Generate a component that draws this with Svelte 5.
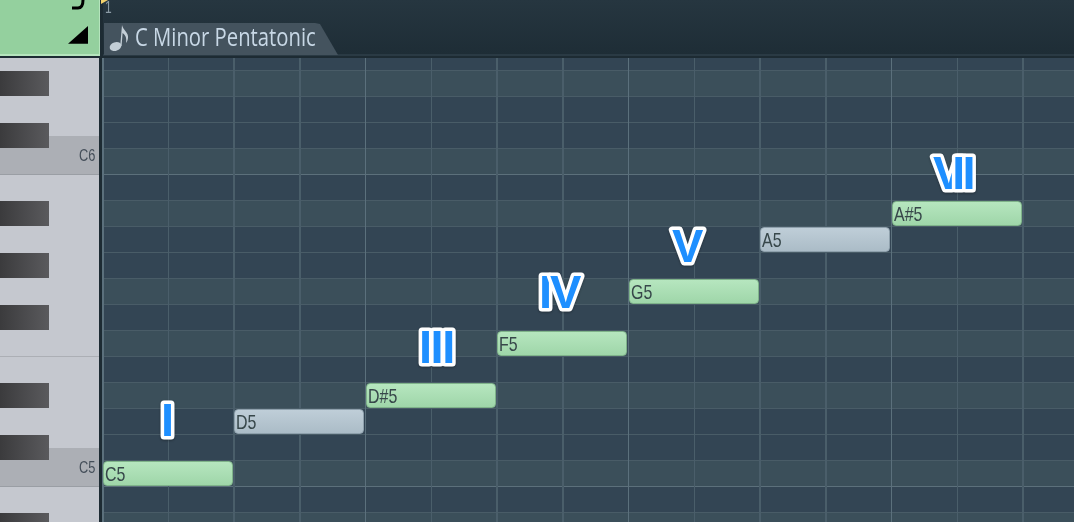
<script>
    const rowHeight = 26;
    const beatWidth = 65.75;
    const rowCount = 20;

    const scaleRows = [1, 4, 6, 9, 11, 13, 16, 18];
    const rows = Array.from({ length: rowCount }, (_, i) => ({
        light: scaleRows.includes(i),
        octave: i === 4 || i === 16,
    }));

    const notes = [
        { label: 'C5', row: 15, beat: 0, tone: 'green' },
        { label: 'D5', row: 13, beat: 2, tone: 'grey' },
        { label: 'D#5', row: 12, beat: 4, tone: 'green' },
        { label: 'F5', row: 10, beat: 6, tone: 'green' },
        { label: 'G5', row: 8, beat: 8, tone: 'green' },
        { label: 'A5', row: 6, beat: 10, tone: 'grey' },
        { label: 'A#5', row: 5, beat: 12, tone: 'green' },
    ];

    // dx tightens the letters one by one, VII overlaps its V and first I
    const degrees = [
        { text: 'I', x: 59, y: 378, dx: '0' },
        { text: 'III', x: 317, y: 305, dx: '0 -1.5 -1.5' },
        { text: 'IV', x: 437, y: 250, dx: '0 -2' },
        { text: 'V', x: 570, y: 204, dx: '0' },
        { text: 'VII', x: 831, y: 131, dx: '0 -12 -3' },
    ];

    const blackKeys = [71, 123, 201, 253, 305, 383, 435, 513];
    const octaveKeys = [
        { name: 'C6', top: 78 },
        { name: 'C5', top: 390 },
    ];
</script>

<div class="roll">
    <header class="top">
        <div class="corner">
            <svg class="flag" width="16" height="10" viewBox="0 0 16 10">
                <path d="M13 0 C13 5 11 8 8 8 H2" fill="none" stroke="#000" stroke-width="3" />
            </svg>
            <svg class="wedge" width="21" height="20" viewBox="0 0 21 20">
                <path d="M0 18.7 L20 1 V18.7 Z" fill="#000" />
            </svg>
        </div>
        <div class="timeline">
            <div class="ruler">
                <span class="marker"></span>
                <span class="bar-number">1</span>
            </div>
            <div class="tab">
                <svg width="24" height="30" viewBox="0 0 24 30">
                    <ellipse cx="7.5" cy="22.5" rx="6" ry="4.3" fill="#c3ced6" transform="rotate(-20 7.5 22.5)" />
                    <path d="M12.2 22 L14 1 C15 6 21 9 20 14 C19.8 16 19 18 18 19 C19 13 17 11 14.6 9 L13.6 22 Z" fill="#c3ced6" />
                </svg>
                <span>C Minor Pentatonic</span>
            </div>
        </div>
    </header>

    <div class="body">
        <aside class="keys">
            {#each octaveKeys as key (key.name)}
                <div class="octave" style="top: {key.top}px"><span>{key.name}</span></div>
            {/each}
            <div class="seam"></div>
            {#each blackKeys as y (y)}
                <div class="black" style="top: {y - 58}px"></div>
            {/each}
        </aside>

        <main class="grid">
            <div class="rows">
                {#each rows as row, i (i)}
                    <div class="row" class:light={row.light} class:octave-line={row.octave} class:first={i === 0}></div>
                {/each}
            </div>

            {#each notes as note (note.label)}
                <div
                    class="note {note.tone}"
                    style="top: {note.row * rowHeight + 13}px; left: {note.beat * beatWidth + 0.6}px"
                >
                    <span>{note.label}</span>
                </div>
            {/each}

            <svg class="marks" width="972" height="464">
                {#each degrees as d (d.text)}
                    <text x={d.x} y={d.y} dx={d.dx}>{d.text}</text>
                {/each}
            </svg>
        </main>
    </div>
</div>

<style>
    :global(body) {
        margin: 0;
        background: #1d2b33;
    }

    .roll {
        width: 1074px;
        height: 522px;
        overflow: hidden;
        display: flex;
        flex-direction: column;
        font-family: "Liberation Sans", sans-serif;
    }

    .top {
        display: flex;
        height: 58px;
        flex: none;
        border-bottom: 2px solid #1d2b33;
        box-sizing: border-box;
    }

    .corner {
        position: relative;
        width: 100px;
        flex: none;
        box-sizing: border-box;
        background: #94d09e;
        border-bottom: 2px solid #b5e4bd;
        border-right: 1px solid #b5e4bd;
    }

    .flag {
        position: absolute;
        top: 0;
        left: 70px;
    }

    .wedge {
        position: absolute;
        top: 25px;
        left: 68px;
    }

    .timeline {
        flex: 1;
        display: flex;
        flex-direction: column;
        background: linear-gradient(#263640, #1e2d36);
        border-bottom: 2px solid #2a3a44;
        margin-left: 3px;
    }

    .ruler {
        height: 23px;
        flex: none;
        position: relative;
        display: flex;
    }

    .marker {
        position: absolute;
        left: -2px;
        top: 0;
        width: 0;
        height: 0;
        border-left: 7px solid #f2d26c;
        border-bottom: 4px solid transparent;
    }

    .bar-number {
        margin-left: 1px;
        font-size: 16px;
        line-height: 15px;
        color: #8c9ca6;
        transform: scaleX(0.75);
    }

    .tab {
        width: 234px;
        height: 32px;
        margin-left: 1px;
        display: flex;
        align-items: center;
        gap: 3px;
        padding-left: 4px;
        box-sizing: border-box;
        background: #44535e;
        clip-path: polygon(0 0, 211px 0, 216px 1px, 234px 32px, 0 32px);
        color: #c8d8e6;
    }

    .tab svg {
        flex: none;
    }

    .tab span {
        display: inline-block;
        margin-bottom: 6px;
        font-family: "Open Sans", sans-serif;
        font-size: 26px;
        line-height: 26px;
        transform: scaleX(0.78);
        transform-origin: left center;
        white-space: nowrap;
    }

    .body {
        flex: 1;
        display: flex;
        min-height: 0;
    }

    .keys {
        position: relative;
        width: 99px;
        flex: none;
        background: #c5c8cf;
    }

    .octave {
        position: absolute;
        left: 0;
        right: 0;
        height: 39px;
        box-sizing: border-box;
        padding: 11px 4px 0 0;
        text-align: right;
        background: #acafb5;
        border-bottom: 1px solid #9a9ea4;
    }

    .octave span {
        display: inline-block;
        font-size: 16px;
        color: #444e59;
        transform: scaleX(0.8);
        transform-origin: right center;
    }

    .seam {
        position: absolute;
        left: 0;
        right: 0;
        top: 298px;
        height: 1px;
        background: #acafb5;
    }

    .black {
        position: absolute;
        left: 0;
        width: 49px;
        height: 25px;
        background: linear-gradient(90deg, #3b3b3d, #5a5a5d);
    }

    .grid {
        position: relative;
        flex: 1;
        min-width: 0;
        overflow: hidden;
        border-left: 3px solid #1d2b33;
    }

    .rows {
        position: absolute;
        inset: 0;
        display: flex;
        flex-direction: column;
    }

    .rows::after {
        content: "";
        position: absolute;
        inset: 0;
        background:
            repeating-linear-gradient(90deg, #5b707c 0 1.5px, transparent 1.5px 263px),
            repeating-linear-gradient(90deg, #4a5e6a 0 1.5px, transparent 1.5px 65.75px);
    }

    .row {
        flex: none;
        height: 26px;
        box-sizing: border-box;
        background: #334554;
        border-bottom: 1px solid #495c67;
    }

    .row.first {
        height: 13px;
    }

    .row.light {
        background: #3b4f5a;
    }

    .row.octave-line {
        border-bottom-color: #5c707b;
    }

    .note {
        position: absolute;
        z-index: 1;
        width: 130px;
        height: 25px;
        box-sizing: border-box;
        padding-left: 1px;
        border-radius: 4px;
        font-size: 21px;
        line-height: 24px;
        color: #37474a;
    }

    .note span {
        display: inline-block;
        transform: scaleX(0.76);
        transform-origin: left center;
    }

    .note.green {
        background: linear-gradient(#b6e6bf, #9fd6a9);
        border: 1px solid #7fb38a;
    }

    .note.grey {
        background: linear-gradient(#bfced8, #abbcc7);
        border: 1px solid #8ea0ac;
    }

    .marks {
        position: absolute;
        left: 0;
        top: 0;
        z-index: 2;
        filter: drop-shadow(0 1px 1px rgba(0, 0, 0, 0.3));
    }

    .marks text {
        font-family: "Liberation Sans", sans-serif;
        font-weight: 700;
        font-size: 47px;
        fill: #1e8fff;
        stroke: #fff;
        stroke-width: 7px;
        stroke-linejoin: round;
        paint-order: stroke fill;
    }
</style>
